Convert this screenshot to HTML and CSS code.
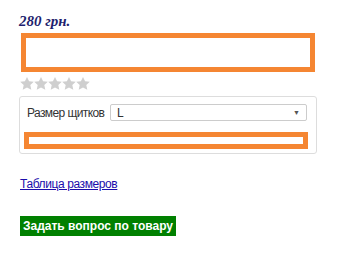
FILE: index.html
```html
<!DOCTYPE html>
<html lang="ru">
<head>
    <meta charset="UTF-8">
    <title>Товар</title>
    <link rel="stylesheet" href="styles.css">
</head>
<body>

<div class="product-info">
    <div class="price">280 грн.</div>

    <div class="highlight-box"></div>

    <!-- Рейтинг -->
    <div class="rating">
        <svg width="70" height="13" viewBox="0 0 70 13">
            <g fill="#cfcfcf">
                <polygon points="7,0 9.1,4.3 13.8,4.8 10.3,8.1 11.3,12.8 7,10.4 2.7,12.8 3.7,8.1 0.2,4.8 4.9,4.3"/>
                <polygon transform="translate(14,0)" points="7,0 9.1,4.3 13.8,4.8 10.3,8.1 11.3,12.8 7,10.4 2.7,12.8 3.7,8.1 0.2,4.8 4.9,4.3"/>
                <polygon transform="translate(28,0)" points="7,0 9.1,4.3 13.8,4.8 10.3,8.1 11.3,12.8 7,10.4 2.7,12.8 3.7,8.1 0.2,4.8 4.9,4.3"/>
                <polygon transform="translate(42,0)" points="7,0 9.1,4.3 13.8,4.8 10.3,8.1 11.3,12.8 7,10.4 2.7,12.8 3.7,8.1 0.2,4.8 4.9,4.3"/>
                <polygon transform="translate(56,0)" points="7,0 9.1,4.3 13.8,4.8 10.3,8.1 11.3,12.8 7,10.4 2.7,12.8 3.7,8.1 0.2,4.8 4.9,4.3"/>
            </g>
        </svg>
    </div>

    <!-- Опции -->
    <div class="options">
        <div class="option-row">
            <span class="option-label">Размер щитков</span>
            <div class="select">
                <span>L</span>
                <span class="select-arrow">&#9660;</span>
            </div>
        </div>
        <div class="highlight-bar"></div>
    </div>

    <a class="size-link" href="#">Таблица размеров</a>

    <button class="btn-ask">Задать вопрос по товару</button>
</div>

</body>
</html>
```

FILE: styles.css
```css
body {
    margin: 0;
    padding: 0;
    background-color: #fff;
    font-family: "Liberation Sans", Arial, sans-serif;
    color: #333;
}

.product-info {
    padding: 12px 0 0 19px;
    width: 298px;
}

.price {
    font-family: "Liberation Serif", "Times New Roman", serif;
    font-size: 15px;
    font-weight: bold;
    font-style: italic;
    line-height: 18px;
    color: #1f1f6e;
}

.highlight-box {
    margin: 3px 0 0 2px;
    width: 284px;
    height: 29px;
    border: 5px solid #f58632;
}

.rating {
    margin: 5px 0 0 1px;
    height: 13px;
}

.rating svg {
    display: block;
}

/* Блок опций */
.options {
    margin-top: 6px;
    border: 1px solid #ddd;
    border-radius: 3px;
    padding: 7px 8px 4px 4px;
}

.option-row {
    display: flex;
    align-items: center;
}

.option-label {
    flex-shrink: 0;
    width: 83px;
    margin-left: 3px;
    font-size: 12px;
    letter-spacing: -0.6px;
    white-space: nowrap;
}

.select {
    flex: 1;
    margin-right: 1px;
    height: 15px;
    border: 1px solid #ccc;
    border-radius: 2px;
    display: flex;
    justify-content: space-between;
    align-items: center;
    padding: 0 6px;
    font-size: 12px;
    color: #333;
}

.select-arrow {
    font-size: 7px;
    color: #555;
}

.highlight-bar {
    margin-top: 11px;
    height: 7px;
    border: 5px solid #f58632;
}

.size-link {
    display: block;
    margin: 23px 0 0 1px;
    font-size: 12px;
    line-height: 14px;
    letter-spacing: -0.4px;
    color: #1a0dab;
}

.btn-ask {
    display: block;
    margin: 25px 0 0 1px;
    width: 156px;
    height: 20px;
    padding: 0;
    border: none;
    border-radius: 0;
    background-color: #008000;
    color: #fff;
    font-family: "Liberation Sans", Arial, sans-serif;
    font-size: 12px;
    font-weight: bold;
    cursor: pointer;
}
```
